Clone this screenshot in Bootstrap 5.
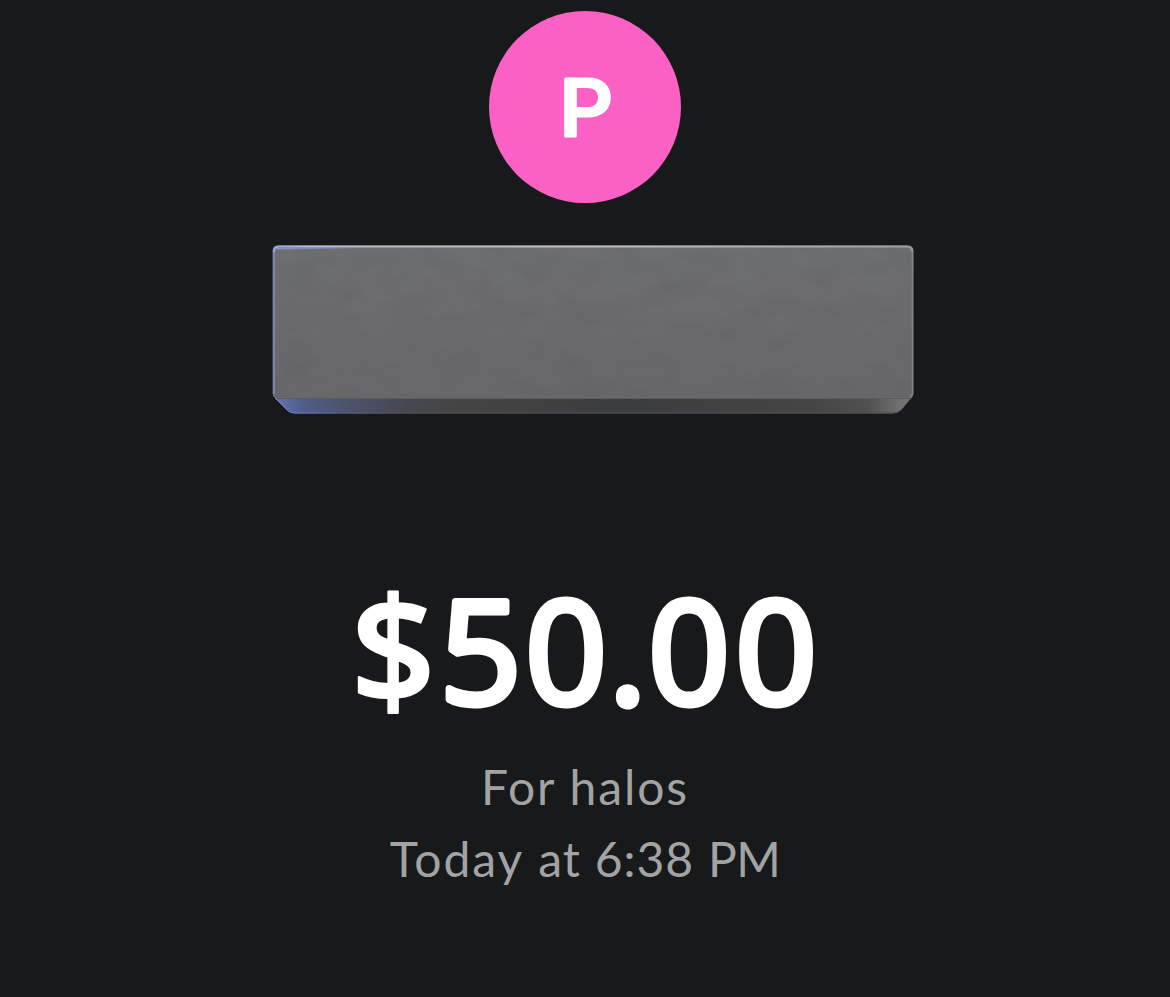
<!DOCTYPE html>
<html lang="en" data-bs-theme="dark">
<head>
<meta charset="utf-8">
<meta name="viewport" content="width=device-width, initial-scale=1">
<title>Payment</title>
<link href="https://cdn.jsdelivr.net/npm/bootstrap@5.3.0/dist/css/bootstrap.min.css" rel="stylesheet">
<style>
  body { background: #18191a; font-family: Lato, "Open Sans", sans-serif; height: 997px; overflow: hidden; }
  .receipt { padding-top: 11px; }
  .avatar { width: 192px; height: 192px; background: #fb60c4; }
  .rounded-type { fill: #fff; stroke: #fff; stroke-linejoin: round; }
  .initial { font: 500 79px Inter, sans-serif; stroke-width: 3px; }
  .slab { margin: 39px 0 0 16px; }
  .amount { margin-top: 112px; }
  .figures { font: 400 142px "Open Sans", sans-serif; stroke-width: 7px; }
  .currency { font-size: 148px; font-weight: 600; stroke-width: 2px; }
  .detail { font-size: 48px; line-height: 72px; color: #a2a3a5; letter-spacing: .9px; word-spacing: .8px; }
  .note { margin-top: -19px; letter-spacing: 1.9px; word-spacing: 0; }
  .day { letter-spacing: 2px; }
  .meridiem { letter-spacing: -.5px; }
</style>
</head>
<body>
<main class="receipt d-flex flex-column align-items-center text-center">
  <div class="avatar rounded-circle text-white flex-shrink-0">
    <svg width="192" height="192"><text class="rounded-type initial" transform="translate(70 124.500) scale(1.07 1)">P</text></svg>
  </div>

  <svg class="slab flex-shrink-0" width="650" height="176" viewBox="268 242 650 176" aria-hidden="true">
    <defs>
      <linearGradient id="face" x1="0" y1="0" x2="0" y2="1"><stop offset="0" stop-color="#6e6f70"/><stop offset="1" stop-color="#68686a"/></linearGradient>
      <linearGradient id="under" x1="273" x2="913" y1="0" y2="0" gradientUnits="userSpaceOnUse">
        <stop offset="0" stop-color="#6577b8"/><stop offset=".045" stop-color="#505e8c"/><stop offset=".12" stop-color="#4b526c"/><stop offset=".21" stop-color="#464850"/><stop offset=".29" stop-color="#444445"/><stop offset=".55" stop-color="#3b3c3d"/><stop offset=".84" stop-color="#454546"/><stop offset=".93" stop-color="#505051"/><stop offset=".98" stop-color="#717172"/><stop offset="1" stop-color="#777"/>
      </linearGradient>
      <linearGradient id="rim" x1="273" x2="913" y1="0" y2="0" gradientUnits="userSpaceOnUse">
        <stop offset="0" stop-color="#98a5dc"/><stop offset=".05" stop-color="#b4bbdc"/><stop offset=".16" stop-color="#b8b8c3"/><stop offset=".5" stop-color="#bcbcbf"/><stop offset="1" stop-color="#9c9d9e"/>
      </linearGradient>
      <linearGradient id="glow" x1="273" x2="370" y1="0" y2="0" gradientUnits="userSpaceOnUse">
        <stop offset="0" stop-color="#8798db"/><stop offset=".5" stop-color="#7986bd"/><stop offset="1" stop-color="#7986bd" stop-opacity="0"/>
      </linearGradient>
      <linearGradient id="edge" x1="273" x2="411" y1="0" y2="0" gradientUnits="userSpaceOnUse">
        <stop offset="0" stop-color="#7285ce"/><stop offset=".4" stop-color="#5c6c9d"/><stop offset="1" stop-color="#525254"/>
      </linearGradient>
      <filter id="grain" x="0" y="0" width="1" height="1" color-interpolation-filters="sRGB">
        <feTurbulence type="fractalNoise" baseFrequency=".025 .04" numOctaves="4" seed="8"/>
        <feColorMatrix values="0 0 0 0 .33  0 0 0 0 .33  0 0 0 0 .39  .9 0 0 0 -.35"/>
      </filter>
    </defs>
    <path d="M273 394H913V396L902 409Q898 413.500 892 413.500H295Q290 413.500 287 410L273 396Z" fill="url(#under)"/>
    <path d="M275 398L287 410Q290 413 295 413H892Q898 413 902 409L911 398" fill="none" stroke="url(#edge)"/>
    <path d="M278 245.500H908Q913.500 245.500 913.500 251V394L910 398.500H277L272.500 394V251Q272.500 245.500 278 245.500Z" fill="url(#face)"/>
    <rect x="275" y="248" width="636" height="149" filter="url(#grain)" opacity=".4"/>
    <path d="M274 394V251Q274 246.700 278 246.700" fill="none" stroke="#7583b5" stroke-width="2"/>
    <path d="M275 248H370V248.300L278 249.500Z" fill="url(#glow)"/>
    <path d="M273.800 252Q274 246.500 279 246.500H907Q912.300 246.500 912.500 252" fill="none" stroke="url(#rim)" stroke-width="1.900"/>
    <path d="M912.500 251V394L910 397.500" fill="none" stroke="#808182" stroke-width="1.500"/>
    <path d="M277 398.500H909" stroke="#5c5c5e"/>
  </svg>

  <svg class="amount flex-shrink-0" width="500" height="240">
    <text class="rounded-type figures" y="174" x="16 105 190.500 274 313.500 400.500"><tspan class="currency">$</tspan>50.00</text>
  </svg>
  <div class="detail note">For halos</div>
  <div class="detail"><span class="day">Today</span> at 6:38 <span class="meridiem">PM</span></div>
</main>
<script src="https://cdn.jsdelivr.net/npm/bootstrap@5.3.0/dist/js/bootstrap.bundle.min.js"></script>
</body>
</html>
